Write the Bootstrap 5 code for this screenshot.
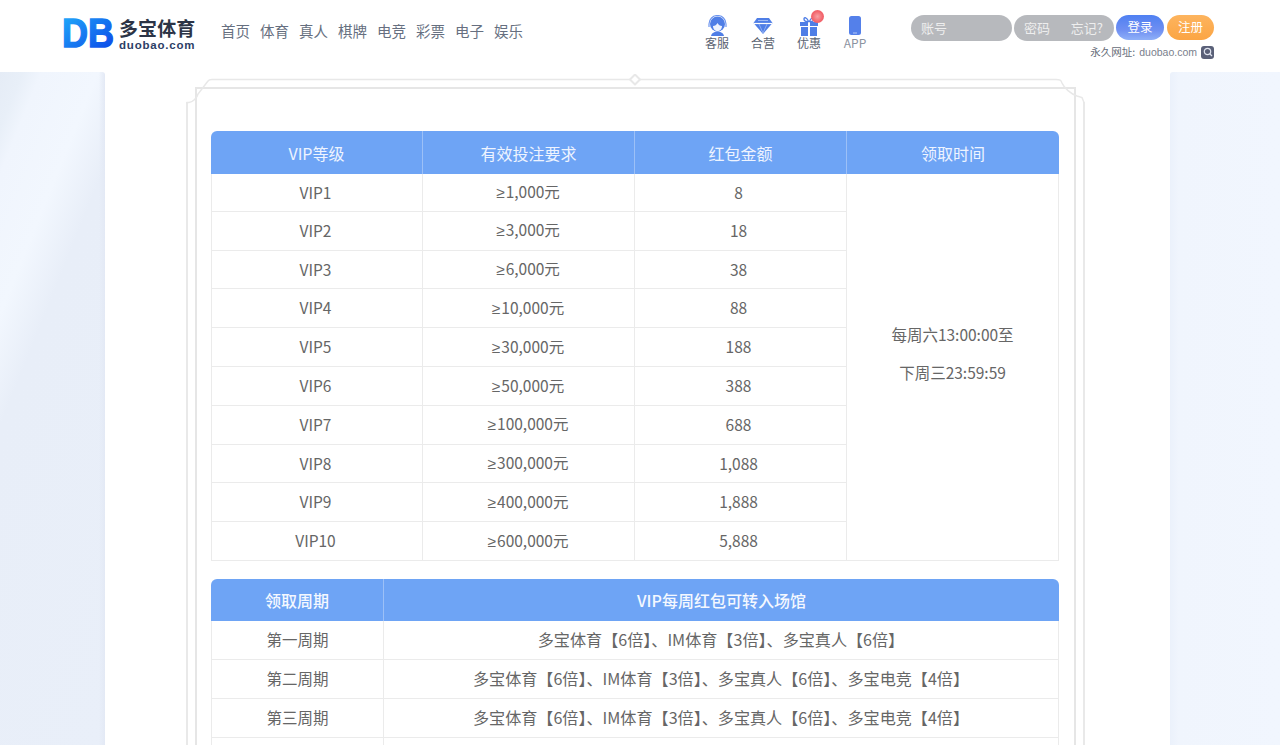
<!DOCTYPE html>
<html lang="zh-CN">
<head>
<meta charset="utf-8">
<title>多宝体育</title>
<link href="https://cdn.jsdelivr.net/npm/bootstrap@5.3.0/dist/css/bootstrap.min.css" rel="stylesheet">
<style>
html,body{margin:0;height:745px;overflow:hidden;background:#fff;font-family:"Noto Sans CJK SC","Noto Sans",sans-serif;color:#666}
.shell{width:1280px;height:745px;overflow:hidden;position:relative}
.topbar{height:72px;background:#fff;padding:0 65px 0 62px;position:relative;z-index:2}
.brand-mark{width:54px;height:38px;margin-top:14px;overflow:visible;flex:none}
.brand-words{margin-left:3px;margin-top:17px;width:80px}
.brand-cn{font-size:19px;font-weight:700;line-height:22px;color:#2c3446;letter-spacing:.1px;white-space:nowrap}
.brand-en{font-family:"Liberation Sans",sans-serif;font-size:11.5px;font-weight:700;line-height:12px;color:#2c3e66;letter-spacing:.8px}
.mainnav{margin-left:22px;margin-top:20px;gap:10px}
.mainnav a{font-size:14.5px;line-height:22px;color:#666f80;text-decoration:none;white-space:nowrap;width:29px}
.quick{position:absolute;left:694px;top:15px;gap:0}
.quick-item{width:46px;text-align:center;font-size:12px;line-height:14px;color:#5c6472;position:relative}
.quick-item svg{display:block;margin:0 auto;height:21px}
.quick-item.dim{color:#8b93a1}
.hot{position:absolute;left:25px;top:-5px;width:13px;height:13px;border-radius:50%;background:radial-gradient(circle,#f7a0a4 0,#f2626a 60%)}
.login{position:absolute;left:911px;top:15px;width:305px}
.field{height:26px;border-radius:13px;background:#b7b9bd;color:#eee;font-size:13px;line-height:26px;padding-left:10px}
.f-user{width:101px}
.f-pass{width:100px;margin-left:2px;display:flex;justify-content:space-between;padding-right:11px}
.pill{height:25px;width:48px;border-radius:13px;margin-left:2px;color:#fff;font-size:12.5px;line-height:24px;text-align:center}
.pill-blue{background:linear-gradient(#4f80f2,#6f8ff2 60%,#8fb0f8)}
.pill-orange{background:linear-gradient(#fdb45e,#fba544);margin-left:3px;width:47px}
.permalink{position:absolute;top:29px;right:2px;font-size:10.5px;line-height:16px;color:#666c78;white-space:nowrap;display:flex;align-items:center}
.permalink b{font-weight:400;color:#7a808c;font-family:"Liberation Sans",sans-serif;margin-left:4px}
.searchbox{width:13px;height:13px;border-radius:3px;background:#5a6078;margin-left:4px;display:flex;align-items:center;justify-content:center}
.stage{height:673px;display:flex}
.side{width:105px;flex:none;border-top-right-radius:3px;background:linear-gradient(90deg,transparent 94%,#e3e9f5),linear-gradient(112deg,#e5ecf6 0,#e8eff8 6%,#f0f5fd 11%,#f2f7fe 26%,#e8eef8 38%,#e9eff9 100%)}
.side-r{width:110px;background:linear-gradient(90deg,#ebf1fb,#f0f5fd 8%,#f1f6fe 100%);border-top-right-radius:0;border-top-left-radius:3px}
.middle{flex:1;background:#fff;position:relative;padding:59px 111px 0 106px}
.frame-outer{position:absolute;left:81px;right:85px;top:30px;bottom:-10px;border-left:2px solid #e9e9e9;border-right:2px solid #e9e9e9}
.frame-inner{position:absolute;left:90px;right:94px;top:15px;bottom:-10px;border:solid #e6e6e6;border-width:2px 2px 0}
.frame-art{position:absolute;left:80px;top:2px}
.grid-a,.grid-b{width:848px;border-collapse:separate;border-spacing:0;table-layout:fixed;margin:0;position:relative;background:#fff}
.grid-a th,.grid-b th{background:#6ea4f5;color:#eef4ff;font-weight:400;font-size:16px;height:43px;padding:0;text-align:center;vertical-align:middle;border-right:1px solid #9cc0f7}
.grid-b th{font-weight:500;color:#f4f8ff;height:42px}
.grid-a th:first-child,.grid-b th:first-child{border-top-left-radius:6px}
.grid-a th:last-child,.grid-b th:last-child{border-top-right-radius:6px;border-right:0}
.grid-a td,.grid-b td{height:38.8px;padding:0;text-align:center;vertical-align:middle;font-size:15.5px;line-height:1.4;color:#666;border-right:1px solid #ebebeb;border-bottom:1px solid #ebebeb}
.grid-b td{height:39px}
.grid-a td:first-child,.grid-b td:first-child{border-left:1px solid #ebebeb}
.grid-a td{padding:0 3px 0 0}
.grid-a td:nth-child(2){padding-right:1px}
.grid-a td:nth-child(3){padding-right:4px}
.grid-a tbody tr:first-child td{height:37.8px}
.grid-b td+td{font-size:16.1px;padding-bottom:1px}
.grid-a td.when{padding:0 0 27px}
.ge{font-family:"Liberation Sans",sans-serif;margin-right:1px}
.gap-t{margin-top:18px}
.note{line-height:38.8px}
</style>
</head>
<body>
<div class="shell">
  <header class="topbar d-flex align-items-start">
    <svg class="brand-mark" viewBox="0 0 54 38" role="img" aria-label="DB">
      <defs><linearGradient id="lg" x1="0" y1="0" x2="1" y2="1"><stop offset="0" stop-color="#22b0fb"/><stop offset="1" stop-color="#0a3fe6"/></linearGradient></defs>
      <text x="0" y="33" font-family="Liberation Sans" font-weight="700" font-size="40" textLength="52" lengthAdjust="spacingAndGlyphs" fill="url(#lg)" stroke="url(#lg)" stroke-width="1.4">DB</text>
    </svg>
    <div class="brand-words">
      <div class="brand-cn">多宝体育</div>
      <div class="brand-en">duobao.com</div>
    </div>
    <nav class="mainnav d-flex">
      <a href="#">首页</a><a href="#">体育</a><a href="#">真人</a><a href="#">棋牌</a><a href="#">电竞</a><a href="#">彩票</a><a href="#">电子</a><a href="#">娱乐</a>
    </nav>
    <div class="quick d-flex">
      <div class="quick-item">
        <svg width="21" height="21" viewBox="0 0 21 21"><circle cx="10.500" cy="9" r="7.500" fill="#4f7ee6"/><path d="M6 11c2 0 3.500-1 4.500-3 1 2 2.500 3 4.500 3 0 3-2 5-4.500 5S6 14 6 11z" fill="#eef3fe"/><path d="M2 12V9a8.500 8.500 0 0 1 17 0v3" fill="none" stroke="#6f96ee" stroke-width="1.200"/><path d="M4 21c.5-3 3.500-4.500 6.500-4.500S16.500 18 17 21z" fill="#4f7ee6"/></svg>
        客服
      </div>
      <div class="quick-item">
        <svg width="20" height="21" viewBox="0 0 20 21"><path d="M4 3h12l3.500 5L10 19 .5 8z" fill="#4f7ee6"/><path d="M1 8.500h18" stroke="#fff" stroke-width="1.200" fill="none"/><path d="M6 9l4 9 4-9" stroke="#9db9f4" stroke-width=".8" fill="none"/><path d="M5 5.500h10" stroke="#9db9f4" stroke-width="1"/></svg>
        合营
      </div>
      <div class="quick-item">
        <svg width="20" height="21" viewBox="0 0 20 21"><path d="M1 7h8v4H1zM11 7h8v4h-8zM2 12h7v9H2zM11 12h7v9h-7z" fill="#4f7ee6"/><path d="M9.500 6.500C8 2 5 2 5 4s2 3 4.500 2.500zM10.500 6.500C12 2 15 2 15 4s-2 3-4.500 2.500z" fill="none" stroke="#4f7ee6" stroke-width="1.400"/></svg>
        <span class="hot"></span>
        优惠
      </div>
      <div class="quick-item dim">
        <svg width="20" height="21" viewBox="0 0 20 21"><rect x="4" y="1" width="12" height="19" rx="2.500" fill="#5480ea"/><path d="M8 18h4" stroke="#b5c8f6" stroke-width="1"/></svg>
        APP
      </div>
    </div>
    <div class="login">
      <div class="d-flex">
        <div class="field f-user">账号</div>
        <div class="field f-pass"><span>密码</span><span>忘记?</span></div>
        <div class="pill pill-blue">登录</div>
        <div class="pill pill-orange">注册</div>
      </div>
      <div class="permalink">永久网址:<b>duobao.com</b><span class="searchbox"><svg width="10" height="10" viewBox="0 0 10 10"><circle cx="4.500" cy="4.500" r="3.200" fill="none" stroke="#dfe3ee" stroke-width="1.200"/><path d="M7 7l2 2" stroke="#dfe3ee" stroke-width="1.200"/></svg></span></div>
    </div>
  </header>
  <div class="stage">
    <div class="side"></div>
    <main class="middle">
      <div class="frame-outer"></div>
      <div class="frame-inner"></div>
      <svg class="frame-art" width="905" height="36" viewBox="0 0 905 36" fill="none" stroke="#e8e8e8">
        <path d="M1.500 28.500 L4 28.500 C8 28 12 24 13 20 L23 7 C24 5.500 25 5.500 27 5.500 H871 C875 5.500 876 6 877 9 C879 14 886 20 892 22 L897 23.500 L899 28.500" stroke-width="1.500"/>
        <path d="M445 5.500 L450 0.500 L455 5.500 L450 10.500 Z" fill="#fff" stroke-width="2" stroke-linejoin="round"/>
      </svg>
      <table class="grid-a">
        <colgroup><col style="width:212px"><col style="width:212px"><col style="width:212px"><col style="width:212px"></colgroup>
        <thead><tr><th>VIP等级</th><th>有效投注要求</th><th>红包金额</th><th>领取时间</th></tr></thead>
        <tbody>
          <tr><td>VIP1</td><td><span class="ge">≥</span>1,000元</td><td>8</td><td class="when" rowspan="10"><div class="note">每周六13:00:00至</div><div class="note">下周三23:59:59</div></td></tr>
          <tr><td>VIP2</td><td><span class="ge">≥</span>3,000元</td><td>18</td></tr>
          <tr><td>VIP3</td><td><span class="ge">≥</span>6,000元</td><td>38</td></tr>
          <tr><td>VIP4</td><td><span class="ge">≥</span>10,000元</td><td>88</td></tr>
          <tr><td>VIP5</td><td><span class="ge">≥</span>30,000元</td><td>188</td></tr>
          <tr><td>VIP6</td><td><span class="ge">≥</span>50,000元</td><td>388</td></tr>
          <tr><td>VIP7</td><td><span class="ge">≥</span>100,000元</td><td>688</td></tr>
          <tr><td>VIP8</td><td><span class="ge">≥</span>300,000元</td><td>1,088</td></tr>
          <tr><td>VIP9</td><td><span class="ge">≥</span>400,000元</td><td>1,888</td></tr>
          <tr><td>VIP10</td><td><span class="ge">≥</span>600,000元</td><td>5,888</td></tr>
        </tbody>
      </table>
      <table class="grid-b gap-t">
        <colgroup><col style="width:173px"><col style="width:675px"></colgroup>
        <thead><tr><th>领取周期</th><th>VIP每周红包可转入场馆</th></tr></thead>
        <tbody>
          <tr><td>第一周期</td><td>多宝体育【6倍】、IM体育【3倍】、多宝真人【6倍】</td></tr>
          <tr><td>第二周期</td><td>多宝体育【6倍】、IM体育【3倍】、多宝真人【6倍】、多宝电竞【4倍】</td></tr>
          <tr><td>第三周期</td><td>多宝体育【6倍】、IM体育【3倍】、多宝真人【6倍】、多宝电竞【4倍】</td></tr>
          <tr><td></td><td></td></tr>
        </tbody>
      </table>
    </main>
    <div class="side side-r"></div>
  </div>
</div>
<script src="https://cdn.jsdelivr.net/npm/bootstrap@5.3.0/dist/js/bootstrap.bundle.min.js"></script>
</body>
</html>
